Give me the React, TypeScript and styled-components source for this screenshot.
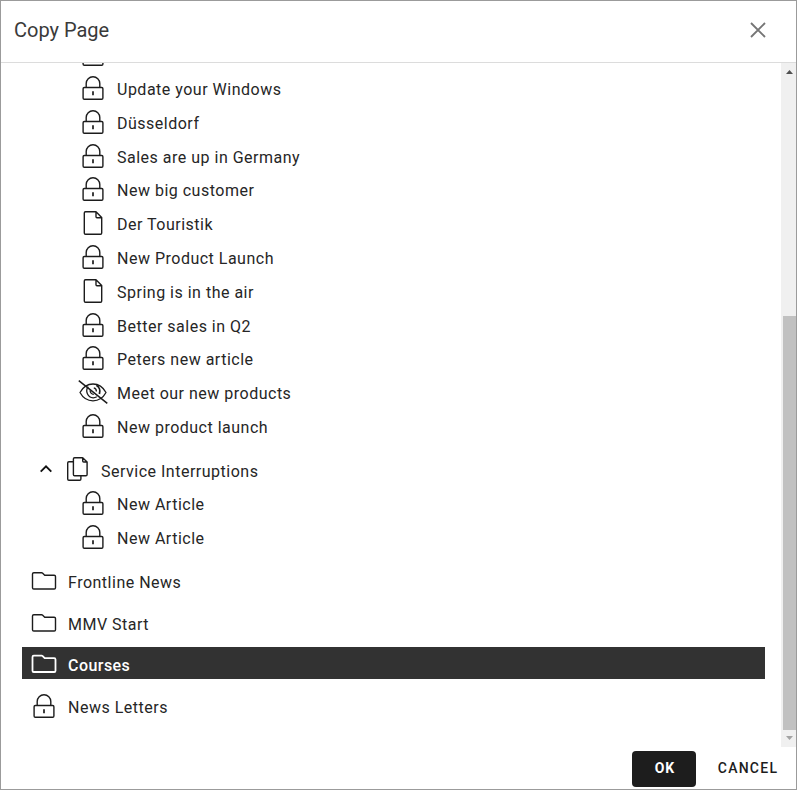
import React from "react";
import styled, { createGlobalStyle, css } from "styled-components";

const GlobalStyle = createGlobalStyle`
  * { box-sizing: border-box; }
  body { margin: 0; background: #fff; font-family: Roboto, sans-serif; }
`;

const Dialog = styled.div`
  display: flex;
  flex-direction: column;
  width: 797px;
  height: 790px;
  border: 1px solid #9b9b9b;
  background: #fff;
  color: #262626;
  overflow: hidden;
`;

const Header = styled.header`
  display: flex;
  flex: none;
  align-items: center;
  justify-content: space-between;
  height: 62px;
  padding: 0 30px 3px 13px;
  border-bottom: 1px solid #dcdcdc;
`;

const Title = styled.h1`
  margin: 0;
  font-size: 20px;
  font-weight: 400;
  line-height: 28px;
  letter-spacing: 0;
  color: #3a3a3a;
`;

const CloseButton = styled.button`
  display: flex;
  padding: 0;
  border: 0;
  background: none;
`;

const Body = styled.div`
  display: flex;
  flex: none;
  height: 684px;
  overflow: hidden;
`;

const Tree = styled.div`
  flex: 1;
  height: 684px;
  padding: 0 16px 0 21px;
  overflow: hidden;
`;

const Scrolled = styled.div`
  margin-top: -26px;
`;

const rowBase = css`
  display: flex;
  align-items: center;
  gap: 8px;
  white-space: nowrap;
`;

const ChildRow = styled.div`
  ${rowBase}
  height: 33.8px;
  padding-left: 56px;

  > svg { margin-top: 0.6px; }
`;

const GroupRow = styled.div`
  ${rowBase}
  height: 32px;
  margin: 10.4px 0 1.3px;
  padding: 1px 0 0 16px;
`;

const RootRow = styled.div<{ $selected?: boolean }>`
  ${rowBase}
  height: 32px;
  margin-top: 9.6px;
  padding: 3px 0 0 7px;
  ${(p) => p.$selected && css`
    background: #323232;
    color: #fff;
  `}
`;

const Label = styled.span<{ $strong?: boolean }>`
  margin-left: 1px;
  padding-top: 4.6px;
  font-size: 16px;
  line-height: 20px;
  font-weight: ${(p) => (p.$strong ? 500 : 400)};
  letter-spacing: ${(p) => (p.$strong ? "0.45px" : "0.5px")};
`;

const IconSvg = styled.svg<{ $light?: boolean }>`
  display: block;
  flex: none;
  width: 30px;
  height: 26px;
  fill: none;
  stroke: ${(p) => (p.$light ? "#fff" : "#1c1c1c")};
  stroke-width: ${(p) => (p.$light ? 1.8 : 1.4)};
  stroke-linejoin: round;
`;

const CaretSvg = styled.svg`
  display: block;
  width: 16px;
  height: 16px;
  fill: none;
  stroke: #111;
  stroke-width: 1.9;
`;

const ScrollTrack = styled.div`
  display: flex;
  flex-direction: column;
  align-items: flex-end;
  justify-content: space-between;
  width: 15px;
  background: #f0f0f0;
`;

const ScrollArrow = styled.svg`
  display: block;
  width: 13px;
  height: 17px;
`;

const ScrollThumb = styled.div`
  width: 13px;
  height: 414px;
  margin-top: auto;
  background: #c1c1c1;
`;

const Footer = styled.footer`
  display: flex;
  justify-content: flex-end;
  gap: 10px;
  padding: 4px 6px 0 0;
`;

const Button = styled.button<{ $primary?: boolean }>`
  width: ${(p) => (p.$primary ? "64px" : "84px")};
  height: 36px;
  padding: ${(p) => (p.$primary ? "0 0 2px 2px" : "0 0 2px")};
  border: 0;
  border-radius: 4px;
  background: ${(p) => (p.$primary ? "#1d1d1d" : "transparent")};
  color: ${(p) => (p.$primary ? "#fff" : "#1d1d1d")};
  font-family: inherit;
  font-size: 14px;
  font-weight: ${(p) => (p.$primary ? 700 : 500)};
  letter-spacing: ${(p) => (p.$primary ? "1px" : "1.25px")};
`;

type Kind = "lock" | "page" | "hidden" | "pages" | "folder";

const shapes: Record<Kind, React.ReactNode> = {
  lock: (
    <>
      <rect x="5.1" y="12.5" width="19.8" height="11.8" rx="1.2" />
      <path d="M8.2 12.5V8.5a6.8 6.8 0 0 1 13.6 0v4" />
      <path d="M15 16.3v4" strokeWidth="1.7" />
    </>
  ),
  page: (
    <path d="M18 1.7H7.5a1.2 1.2 0 0 0-1.2 1.2v20.2a1.2 1.2 0 0 0 1.2 1.2h15a1.2 1.2 0 0 0 1.2-1.2V7.5L18 1.7v5.1a1 1 0 0 0 1 1h4.6" />
  ),
  hidden: (
    <>
      <path d="M2 13.5C5 8 9.7 5 15 5S25 8 28 13.5C25 19 20.3 21.8 15 21.8S5 19 2 13.5Z" strokeWidth="1.3" />
      <path d="M10.2 7.6a7 7 0 0 0 5 11.2 7 7 0 0 0 3.6-1" strokeWidth="1.3" />
      <path d="M18.4 6.3a7.3 7.3 0 0 1 3 8.7" strokeWidth="1.8" />
      <path d="M15.8 8.9a3.6 3.6 0 0 1 2.6 3.6M12.2 11.3a3.5 3.5 0 0 0 3.6 4" strokeWidth="1.3" />
      <path d="M0.8 1.7 29.3 24.3" strokeWidth="1.5" />
    </>
  ),
  pages: (
    <>
      <path d="M20.7 1.7H12.6a1.2 1.2 0 0 0-1.2 1.2v15.7a1.2 1.2 0 0 0 1.2 1.2h11.3a1.2 1.2 0 0 0 1.2-1.2V6L20.7 1.7V5a1 1 0 0 0 1 1h3.4" />
      <path d="M11.4 5.7H6.9a1.2 1.2 0 0 0-1.2 1.2v16.2a1.2 1.2 0 0 0 1.2 1.2h10.8a1.2 1.2 0 0 0 1.2-1.2v-3.3" />
    </>
  ),
  folder: (
    <path d="M4.8 4.7h7.8c.5 0 .8.2 1.1.5l2 2h9.5a1.3 1.3 0 0 1 1.3 1.3v11.2a1.3 1.3 0 0 1-1.3 1.3H4.8a1.3 1.3 0 0 1-1.3-1.3V6a1.3 1.3 0 0 1 1.3-1.3Z" />
  ),
};

function Icon({ kind, light }: { kind: Kind; light?: boolean }) {
  return (
    <IconSvg viewBox="0 0 30 26" $light={light} aria-hidden="true">
      {shapes[kind]}
    </IconSvg>
  );
}

interface Item {
  kind: Kind;
  label: string;
  selected?: boolean;
}

const articles: Item[] = [
  { kind: "lock", label: "" },
  { kind: "lock", label: "Update your Windows" },
  { kind: "lock", label: "Düsseldorf" },
  { kind: "lock", label: "Sales are up in Germany" },
  { kind: "lock", label: "New big customer" },
  { kind: "page", label: "Der Touristik" },
  { kind: "lock", label: "New Product Launch" },
  { kind: "page", label: "Spring is in the air" },
  { kind: "lock", label: "Better sales in Q2" },
  { kind: "lock", label: "Peters new article" },
  { kind: "hidden", label: "Meet our new products" },
  { kind: "lock", label: "New product launch" },
];

const interruptions: Item[] = [
  { kind: "lock", label: "New Article" },
  { kind: "lock", label: "New Article" },
];

const roots: Item[] = [
  { kind: "folder", label: "Frontline News" },
  { kind: "folder", label: "MMV Start" },
  { kind: "folder", label: "Courses", selected: true },
  { kind: "lock", label: "News Letters" },
];

function Children({ items }: { items: Item[] }) {
  return (
    <>
      {items.map((item, i) => (
        <ChildRow key={i}>
          <Icon kind={item.kind} />
          <Label>{item.label}</Label>
        </ChildRow>
      ))}
    </>
  );
}

export default function App() {
  return (
    <>
      <GlobalStyle />
      <Dialog role="dialog">
        <Header>
          <Title>Copy Page</Title>
          <CloseButton aria-label="Close">
            <svg width="16" height="16" viewBox="0 0 16 16" fill="none" stroke="#757575" strokeWidth="1.9">
              <path d="M1 1 15 15M15 1 1 15" />
            </svg>
          </CloseButton>
        </Header>
        <Body>
          <Tree>
            <Scrolled>
              <Children items={articles} />
              <GroupRow>
                <CaretSvg viewBox="0 0 16 16">
                  <path d="M2.7 10.6 8 5.3l5.3 5.3" />
                </CaretSvg>
                <Icon kind="pages" />
                <Label>Service Interruptions</Label>
              </GroupRow>
              <Children items={interruptions} />
              {roots.map((item) => (
                <RootRow key={item.label} $selected={item.selected}>
                  <Icon kind={item.kind} light={item.selected} />
                  <Label $strong={item.selected}>{item.label}</Label>
                </RootRow>
              ))}
            </Scrolled>
          </Tree>
          <ScrollTrack>
            <ScrollArrow viewBox="0 0 13 17">
              <path d="M3 11h7L6.5 7Z" fill="#505050" />
            </ScrollArrow>
            <ScrollThumb />
            <ScrollArrow viewBox="0 0 13 17">
              <path d="M3 6h7l-3.5 4Z" fill="#a3a3a3" />
            </ScrollArrow>
          </ScrollTrack>
        </Body>
        <Footer>
          <Button $primary>OK</Button>
          <Button>CANCEL</Button>
        </Footer>
      </Dialog>
    </>
  );
}
